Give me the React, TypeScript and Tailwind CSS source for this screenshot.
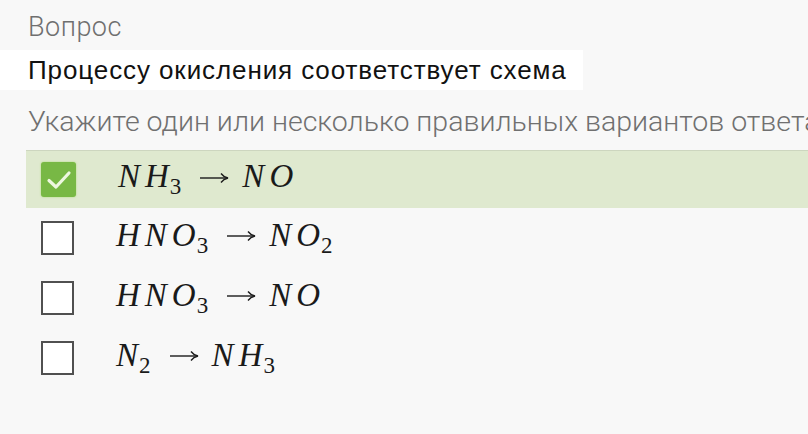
const options = [
  { checked: true, parts: [["N"], ["H", "3"], "→", ["N"], ["O"]] },
  { checked: false, parts: [["H"], ["N"], ["O", "3"], "→", ["N"], ["O", "2"]] },
  { checked: false, parts: [["H"], ["N"], ["O", "3"], "→", ["N"], ["O"]] },
  { checked: false, parts: [["N", "2"], "→", ["N"], ["H", "3"]] },
] as const;

function Arrow() {
  return (
    <svg width="30" height="14" viewBox="0 0 30 14" className="mx-[13px] self-center mt-[2px]">
      <path d="M1 7 H28" stroke="#1a1a1a" strokeWidth="1.4" />
      <path d="M22 2.5 Q24.5 6 29 7 Q24.5 8 22 11.5" fill="none" stroke="#1a1a1a" strokeWidth="1.3" />
    </svg>
  );
}

function Formula({ parts }: { parts: readonly (string | readonly string[])[] }) {
  return (
    <div className="flex items-baseline -mt-[6px] font-['Liberation_Serif',serif] text-[33px] leading-none text-[#1a1a1a]">
      {parts.map((p, i) =>
        typeof p === "string" ? (
          <Arrow key={i} />
        ) : (
          <span key={i} className="italic mr-[5px]">
            {p[0]}
            {p[1] && <span className="not-italic text-[23px] relative top-[7px] ml-[1px]">{p[1]}</span>}
          </span>
        )
      )}
    </div>
  );
}

function Check({ checked }: { checked: boolean }) {
  if (checked)
    return (
      <div className="w-[35px] h-[35px] rounded-[3px] bg-[#78b845] shadow-[0_0_2px_#a6d86e] flex items-center justify-center">
        <svg width="26" height="20" viewBox="0 0 26 20">
          <path d="M3 10.5 L10 17 L23 3" fill="none" stroke="#eef7e0" strokeWidth="3.2" strokeLinecap="round" strokeLinejoin="round" />
        </svg>
      </div>
    );
  return <div className="w-[33px] h-[34px] border-2 border-[#505050] bg-white" />;
}

export default function App() {
  return (
    <div className="w-[808px] h-[434px] bg-[#f8f8f8] overflow-hidden font-['Roboto',sans-serif]">
      <div className="pt-[12px] pl-[28px] text-[27px] leading-[30px] tracking-[0.5px] font-light text-[#6f6f6f]">Вопрос</div>
      <div className="mt-[8px] pl-[28px] w-[583px] bg-white font-['Liberation_Sans',sans-serif] text-[26px] leading-[40px] tracking-[0.9px] text-[#111]">
        Процессу окисления соответствует схема
      </div>
      <div className="mt-[15px] pl-[28px] text-[28.5px] leading-[34px] font-light text-[#707070] whitespace-nowrap">
        Укажите один или несколько правильных вариантов ответа
      </div>
      <div className="mt-[11px] ml-[26px] flex flex-col">
        {options.map((o, i) => (
          <div
            key={i}
            className={`flex items-center pl-[15px] gap-[42px] ${o.checked ? "h-[58px] bg-[#dfe9cf] border-t border-[#cdd6bf]" : "h-[60px]"}`}
          >
            <Check checked={o.checked} />
            <Formula parts={o.parts} />
          </div>
        ))}
      </div>
    </div>
  );
}
